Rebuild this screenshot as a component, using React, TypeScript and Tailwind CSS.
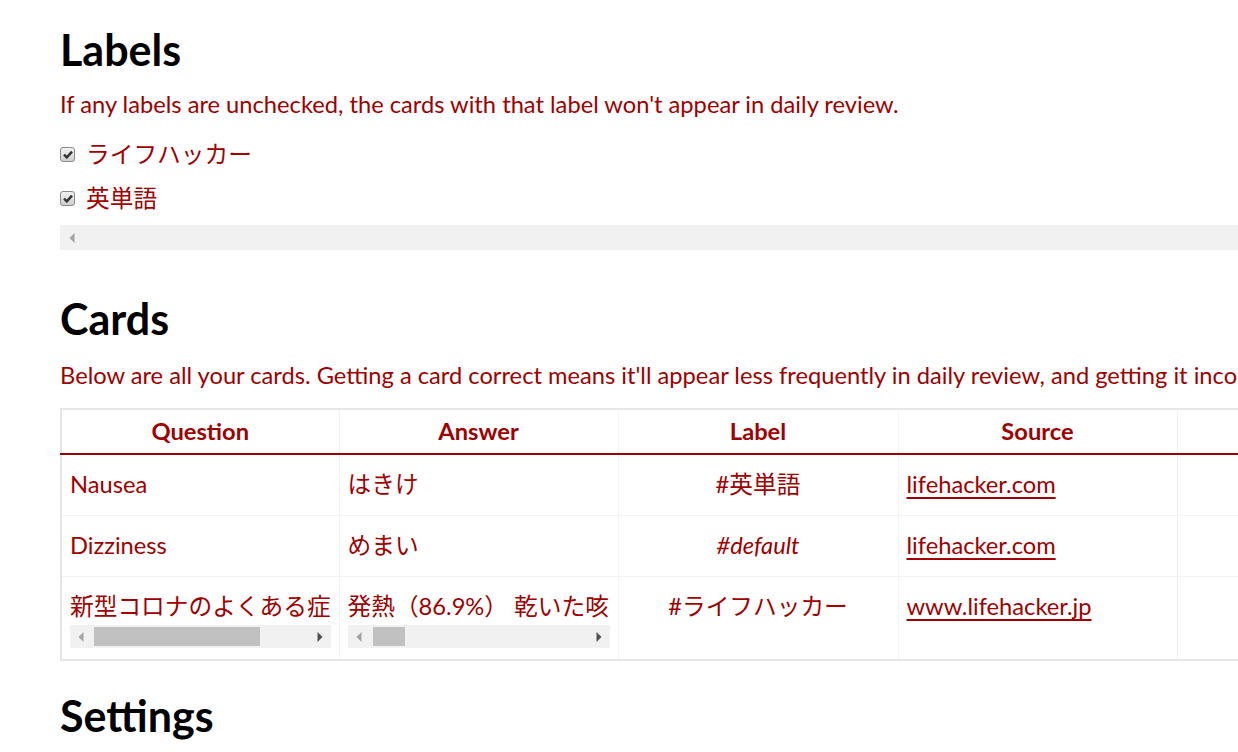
import React from "react";

const red = "text-[#a00000]";

function CheckBox() {
  return (
    <span className="flex h-[15px] w-[15px] shrink-0 items-center justify-center rounded-[3px] border border-[#8a8a8a] bg-gradient-to-b from-[#f2f2f2] to-[#cfcfcf]">
      <svg width="10" height="9" viewBox="0 0 10 9">
        <path d="M1 4.6 L3.8 7.4 L9 1.6" fill="none" stroke="#333" strokeWidth="2.4" />
      </svg>
    </span>
  );
}

function LeftArrow({ dark }: { dark?: boolean }) {
  return (
    <svg width="6" height="10" viewBox="0 0 6 10" className="shrink-0">
      <path d="M5.5 0 L0.5 5 L5.5 10 Z" fill={dark ? "#505050" : "#a3a3a3"} />
    </svg>
  );
}

function RightArrow({ dark }: { dark?: boolean }) {
  return (
    <svg width="6" height="10" viewBox="0 0 6 10" className="shrink-0">
      <path d="M0.5 0 L5.5 5 L0.5 10 Z" fill={dark ? "#505050" : "#a3a3a3"} />
    </svg>
  );
}

function FakeScrollbar({ thumbLeft, thumbWidth }: { thumbLeft: number; thumbWidth: number }) {
  return (
    <div className="relative mt-[4px] flex h-[23px] w-full items-center justify-between bg-[#f1f1f1] px-[8px]">
      <LeftArrow />
      <div
        className="absolute top-[2px] bottom-[2px] bg-[#c1c1c1]"
        style={{ left: thumbLeft, width: thumbWidth }}
      />
      <RightArrow dark />
    </div>
  );
}

const labels = ["ライフハッカー", "英単語"];

const cards = [
  { q: "Nausea", a: "はきけ", label: "#英単語", italic: false, source: "lifehacker.com", scroll: false },
  { q: "Dizziness", a: "めまい", label: "#default", italic: true, source: "lifehacker.com", scroll: false },
  {
    q: "新型コロナのよくある症状は？",
    a: "発熱（86.9%） 乾いた咳（67.7%） 倦怠感（38.1%）",
    label: "#ライフハッカー",
    italic: false,
    source: "www.lifehacker.jp",
    scroll: true
  }
];

const headers = ["Question", "Answer", "Label", "Source", "Due", "Actions"];

export default function App() {
  return (
    <div className="h-[752px] w-[1238px] overflow-hidden bg-white font-['Lato','Noto_Sans_CJK_JP',sans-serif]">
      <div className="w-[1900px] pl-[60px]">
        <h2 className="mt-[25px] text-[43px] font-bold leading-[50px] text-black">Labels</h2>
        <p className={`mt-[14px] text-[23.7px] leading-[30px] ${red}`}>
          If any labels are unchecked, the cards with that label won't appear in daily review.
        </p>

        <div className="mt-[20px] flex flex-col gap-[14px]">
          {labels.map((l) => (
            <label key={l} className={`flex h-[30px] items-center gap-[11px] text-[23.7px] leading-[30px] ${red}`}>
              <CheckBox />
              <span>{l}</span>
            </label>
          ))}
        </div>

        <div className="mt-[12px] flex h-[25px] w-[1500px] items-center bg-[#f1f1f1] pl-[9px]">
          <LeftArrow />
        </div>

        <h2 className="mt-[44px] text-[43px] font-bold leading-[50px] text-black">Cards</h2>
        <p className={`mt-[16px] whitespace-nowrap text-[23.7px] leading-[30px] ${red}`}>
          Below are all your cards. Getting a card correct means it'll appear less frequently in daily review, and getting it incorrect means it'll appear more frequently.
        </p>

        <table className="mt-[18px] w-[1676px] table-fixed border-collapse border-2 border-[#e6e6e6] text-[23.7px]">
          <colgroup>
            <col className="w-[278px]" />
            <col className="w-[279px]" />
            <col className="w-[280px]" />
            <col className="w-[279px]" />
            <col className="w-[280px]" />
            <col className="w-[280px]" />
          </colgroup>
          <thead>
            <tr className="border-b-2 border-[#a00000]">
              {headers.map((h) => (
                <th
                  key={h}
                  className={`border-x border-[#f2f2f2] px-[8px] py-[6px] text-center font-bold leading-[31px] ${red}`}
                >
                  {h}
                </th>
              ))}
            </tr>
          </thead>
          <tbody>
            {cards.map((c) => {
              const pad = c.scroll ? "pt-[14px] pb-[11px]" : "pt-[14px] pb-[16px]";
              return (
                <tr key={c.q} className="border-t border-[#f2f2f2] align-top">
                  <td className={`border-x border-[#f2f2f2] px-[8px] ${pad} leading-[30px] ${red}`}>
                    <div className="overflow-hidden whitespace-nowrap">{c.q}</div>
                    {c.scroll && <FakeScrollbar thumbLeft={24} thumbWidth={166} />}
                  </td>
                  <td className={`border-x border-[#f2f2f2] px-[8px] ${pad} leading-[30px] ${red}`}>
                    <div className="overflow-hidden whitespace-nowrap">{c.a}</div>
                    {c.scroll && <FakeScrollbar thumbLeft={25} thumbWidth={32} />}
                  </td>
                  <td
                    className={`border-x border-[#f2f2f2] px-[8px] ${pad} text-center leading-[30px] ${red} ${
                      c.italic ? "italic" : ""
                    }`}
                  >
                    {c.label}
                  </td>
                  <td className={`border-x border-[#f2f2f2] px-[8px] ${pad} leading-[30px] ${red}`}>
                    <a href="#" className="underline decoration-2 underline-offset-[4px]">
                      {c.source}
                    </a>
                  </td>
                  <td className={`border-x border-[#f2f2f2] px-[8px] ${pad}`} />
                  <td className={`border-x border-[#f2f2f2] px-[8px] ${pad}`} />
                </tr>
              );
            })}
          </tbody>
        </table>

        <h2 className="mt-[30px] text-[43px] font-bold leading-[50px] text-black">Settings</h2>
      </div>
    </div>
  );
}
